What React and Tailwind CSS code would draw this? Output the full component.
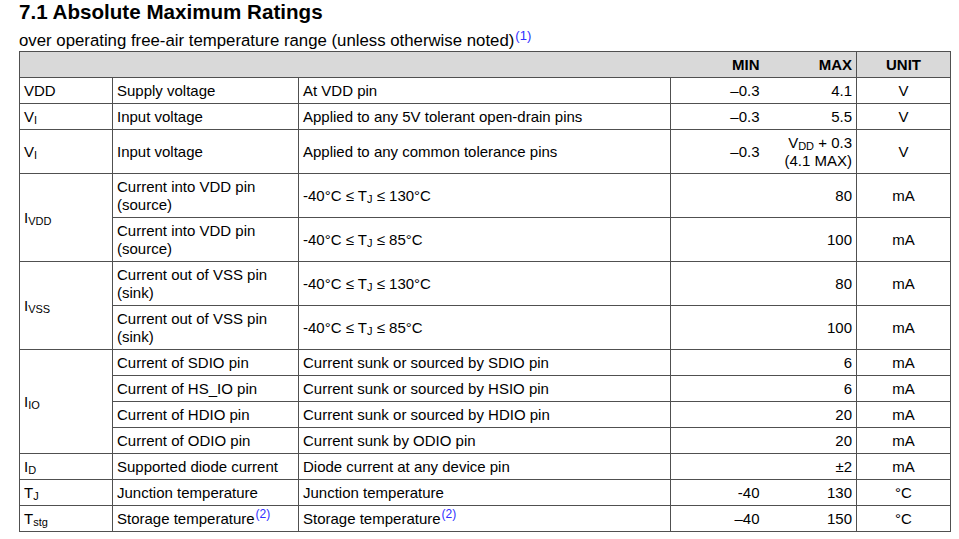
import React from 'react';

const FONT = { fontFamily: '"Liberation Sans", Arial, sans-serif' };

const Sub = ({ children }) => (
  <sub className="text-[11px] leading-none">{children}</sub>
);

const Note = ({ n, big }) => (
  <sup className={`${big ? 'text-[13px]' : 'text-[12px]'} text-[#2f2fff] leading-none ml-px`}>({n})</sup>
);

const cell = 'border border-[#505050] px-[4px] leading-[18px] align-middle';

const ROWS = [
  { sym: 'VDD', param: 'Supply voltage', cond: 'At VDD pin', min: '–0.3', max: '4.1', unit: 'V' },
  { sym: <>V<Sub>I</Sub></>, param: 'Input voltage', cond: 'Applied to any 5V tolerant open-drain pins', min: '–0.3', max: '5.5', unit: 'V' },
  {
    sym: <>V<Sub>I</Sub></>, param: 'Input voltage', cond: 'Applied to any common tolerance pins', min: '–0.3',
    max: <>V<Sub>DD</Sub> + 0.3<br />(4.1 MAX)</>, unit: 'V', tall: true,
  },
];

const tj = (hi) => <>-40°C ≤ T<Sub>J</Sub> ≤ {hi}°C</>;

export default function App() {
  return (
    <div className="bg-white w-[959px] h-[539px] pl-[19px] text-black" style={FONT}>
      <h1 className="text-[20.6px] font-bold leading-[24px]">7.1 Absolute Maximum Ratings</h1>
      <p className="text-[16.8px] leading-[20px] mt-[7px]">
        over operating free-air temperature range (unless otherwise noted)<Note n={1} big />
      </p>
      <table className="table-fixed border-collapse w-[931px] text-[15px]">
        <colgroup>
          <col className="w-[93px]" />
          <col className="w-[186px]" />
          <col className="w-[372px]" />
          <col className="w-[93px]" />
          <col className="w-[93px]" />
          <col className="w-[94px]" />
        </colgroup>
        <thead>
          <tr className="h-[26px] bg-[#d9d9d9] font-bold">
            <th className={`${cell} border-r-0`} colSpan={3}></th>
            <th className={`${cell} text-right border-x-0`}>MIN</th>
            <th className={`${cell} text-right border-l-0`}>MAX</th>
            <th className={`${cell} text-center`}>UNIT</th>
          </tr>
        </thead>
        <tbody>
          {ROWS.map((r, i) => (
            <tr key={i} className={r.tall ? 'h-[44px]' : 'h-[26px]'}>
              <td className={cell}>{r.sym}</td>
              <td className={cell}>{r.param}</td>
              <td className={cell}>{r.cond}</td>
              <td className={`${cell} text-right border-r-0`}>{r.min}</td>
              <td className={`${cell} text-right border-l-0`}>{r.max}</td>
              <td className={`${cell} text-center`}>{r.unit}</td>
            </tr>
          ))}

          <tr className="h-[44px]">
            <td className={cell} rowSpan={2}>I<Sub>VDD</Sub></td>
            <td className={cell}>Current into VDD pin<br />(source)</td>
            <td className={cell}>{tj(130)}</td>
            <td className={`${cell} border-r-0`}></td>
            <td className={`${cell} text-right border-l-0`}>80</td>
            <td className={`${cell} text-center`}>mA</td>
          </tr>
          <tr className="h-[44px]">
            <td className={cell}>Current into VDD pin<br />(source)</td>
            <td className={cell}>{tj(85)}</td>
            <td className={`${cell} border-r-0`}></td>
            <td className={`${cell} text-right border-l-0`}>100</td>
            <td className={`${cell} text-center`}>mA</td>
          </tr>

          <tr className="h-[44px]">
            <td className={cell} rowSpan={2}>I<Sub>VSS</Sub></td>
            <td className={cell}>Current out of VSS pin<br />(sink)</td>
            <td className={cell}>{tj(130)}</td>
            <td className={`${cell} border-r-0`}></td>
            <td className={`${cell} text-right border-l-0`}>80</td>
            <td className={`${cell} text-center`}>mA</td>
          </tr>
          <tr className="h-[44px]">
            <td className={cell}>Current out of VSS pin<br />(sink)</td>
            <td className={cell}>{tj(85)}</td>
            <td className={`${cell} border-r-0`}></td>
            <td className={`${cell} text-right border-l-0`}>100</td>
            <td className={`${cell} text-center`}>mA</td>
          </tr>

          {[
            ['Current of SDIO pin', 'Current sunk or sourced by SDIO pin', '6'],
            ['Current of HS_IO pin', 'Current sunk or sourced by HSIO pin', '6'],
            ['Current of HDIO pin', 'Current sunk or sourced by HDIO pin', '20'],
            ['Current of ODIO pin', 'Current sunk by ODIO pin', '20'],
          ].map(([p, c, m], i) => (
            <tr key={p} className="h-[26px]">
              {i === 0 && <td className={cell} rowSpan={4}>I<Sub>IO</Sub></td>}
              <td className={cell}>{p}</td>
              <td className={cell}>{c}</td>
              <td className={`${cell} border-r-0`}></td>
              <td className={`${cell} text-right border-l-0`}>{m}</td>
              <td className={`${cell} text-center`}>mA</td>
            </tr>
          ))}

          <tr className="h-[26px]">
            <td className={cell}>I<Sub>D</Sub></td>
            <td className={cell}>Supported diode current</td>
            <td className={cell}>Diode current at any device pin</td>
            <td className={`${cell} border-r-0`}></td>
            <td className={`${cell} text-right border-l-0`}>±2</td>
            <td className={`${cell} text-center`}>mA</td>
          </tr>
          <tr className="h-[26px]">
            <td className={cell}>T<Sub>J</Sub></td>
            <td className={cell}>Junction temperature</td>
            <td className={cell}>Junction temperature</td>
            <td className={`${cell} text-right border-r-0`}>-40</td>
            <td className={`${cell} text-right border-l-0`}>130</td>
            <td className={`${cell} text-center`}>°C</td>
          </tr>
          <tr className="h-[26px]">
            <td className={cell}>T<Sub>stg</Sub></td>
            <td className={cell}>Storage temperature<Note n={2} /></td>
            <td className={cell}>Storage temperature<Note n={2} /></td>
            <td className={`${cell} text-right border-r-0`}>–40</td>
            <td className={`${cell} text-right border-l-0`}>150</td>
            <td className={`${cell} text-center`}>°C</td>
          </tr>
        </tbody>
      </table>
    </div>
  );
}
